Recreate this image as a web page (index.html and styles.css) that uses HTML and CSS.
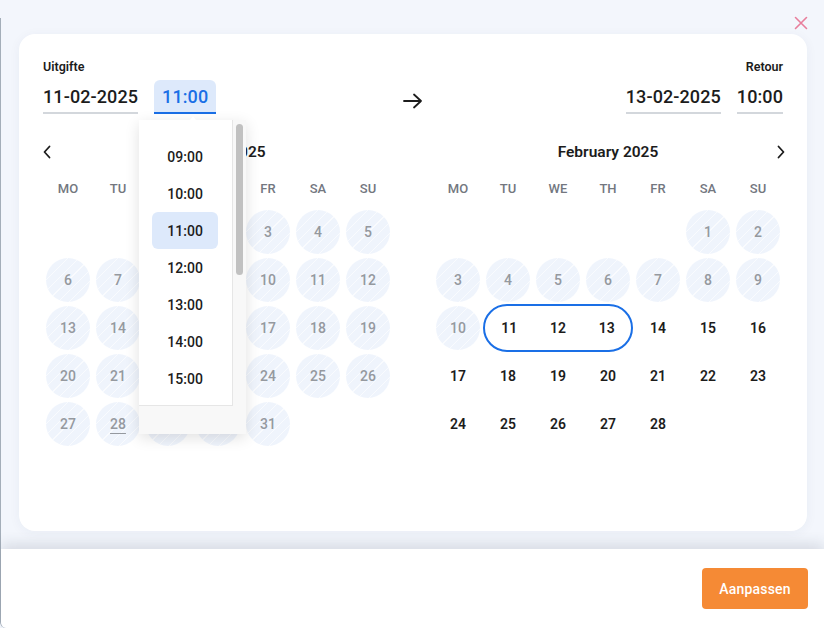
FILE: index.html
```html
<!DOCTYPE html>
<html lang="nl">
<head>
<meta charset="utf-8">
<title>Datum kiezen</title>
<link rel="stylesheet" href="styles.css">
</head>
<body>
<div class="page">
  <button class="close" aria-label="Sluiten">
    <svg width="14" height="14" viewBox="0 0 14 14"><path d="M1.5 1.5L12.5 12.5M12.5 1.5L1.5 12.5" stroke="#e87e9c" stroke-width="1.6" stroke-linecap="round" fill="none"/></svg>
  </button>
  <div class="modal">
    <div class="modal-body">
      <div class="card">
        <div class="trip">
          <div class="leg">
            <div class="label">Uitgifte</div>
            <div class="fields">
              <div class="field">11-02-2025</div>
              <div class="time-wrap">
                <div class="field field--time field--active">11:00</div>
                <div class="dropdown">
                  <div class="dd-list">
                    <div class="dd-item">09:00</div>
                    <div class="dd-item">10:00</div>
                    <div class="dd-item dd-item--sel">11:00</div>
                    <div class="dd-item">12:00</div>
                    <div class="dd-item">13:00</div>
                    <div class="dd-item">14:00</div>
                    <div class="dd-item">15:00</div>
                  </div>
                  <div class="dd-track"><div class="dd-thumb"></div></div>
                  <div class="dd-foot"></div>
                </div>
              </div>
            </div>
          </div>
          <div class="arrow">
            <svg width="20" height="16" viewBox="0 0 20 16"><path d="M1 8H18M11 1.5L18 8L11 14.5" stroke="#1c1c1c" stroke-width="1.8" fill="none" stroke-linecap="round" stroke-linejoin="round"/></svg>
          </div>
          <div class="leg leg--return">
            <div class="label">Retour</div>
            <div class="fields">
              <div class="field">13-02-2025</div>
              <div class="field">10:00</div>
            </div>
          </div>
        </div>

        <div class="calendars">
          <div class="cal">
            <div class="cal-head">
              <span class="nav nav--prev"><svg width="10" height="14" viewBox="0 0 10 14"><path d="M7.5 1.5L2.5 7L7.5 12.5" stroke="#1c1c1c" stroke-width="1.8" fill="none" stroke-linecap="round" stroke-linejoin="round"/></svg></span>
              <span class="cal-title">January 2025</span>
              <span></span>
            </div>
            <div class="weekdays"><span>MO</span><span>TU</span><span>WE</span><span>TH</span><span>FR</span><span>SA</span><span>SU</span></div>
            <div class="days">
              <span></span><span></span>
              <span class="day off"><i>1</i></span><span class="day off"><i>2</i></span><span class="day off"><i>3</i></span><span class="day off"><i>4</i></span><span class="day off"><i>5</i></span>
              <span class="day off"><i>6</i></span><span class="day off"><i>7</i></span><span class="day off"><i>8</i></span><span class="day off"><i>9</i></span><span class="day off"><i>10</i></span><span class="day off"><i>11</i></span><span class="day off"><i>12</i></span>
              <span class="day off"><i>13</i></span><span class="day off"><i>14</i></span><span class="day off"><i>15</i></span><span class="day off"><i>16</i></span><span class="day off"><i>17</i></span><span class="day off"><i>18</i></span><span class="day off"><i>19</i></span>
              <span class="day off"><i>20</i></span><span class="day off"><i>21</i></span><span class="day off"><i>22</i></span><span class="day off"><i>23</i></span><span class="day off"><i>24</i></span><span class="day off"><i>25</i></span><span class="day off"><i>26</i></span>
              <span class="day off"><i>27</i></span><span class="day off today"><i>28</i></span><span class="day off"><i>29</i></span><span class="day off"><i>30</i></span><span class="day off"><i>31</i></span>
            </div>
          </div>

          <div class="cal">
            <div class="cal-head">
              <span></span>
              <span class="cal-title">February 2025</span>
              <span class="nav nav--next"><svg width="10" height="14" viewBox="0 0 10 14"><path d="M2.5 1.5L7.5 7L2.5 12.5" stroke="#1c1c1c" stroke-width="1.8" fill="none" stroke-linecap="round" stroke-linejoin="round"/></svg></span>
            </div>
            <div class="weekdays"><span>MO</span><span>TU</span><span>WE</span><span>TH</span><span>FR</span><span>SA</span><span>SU</span></div>
            <div class="days">
              <span></span><span></span><span></span><span></span><span></span>
              <span class="day off"><i>1</i></span><span class="day off"><i>2</i></span>
              <span class="day off"><i>3</i></span><span class="day off"><i>4</i></span><span class="day off"><i>5</i></span><span class="day off"><i>6</i></span><span class="day off"><i>7</i></span><span class="day off"><i>8</i></span><span class="day off"><i>9</i></span>
              <span class="day off"><i>10</i></span>
              <div class="range"><span class="day"><i>11</i></span><span class="day"><i>12</i></span><span class="day"><i>13</i></span></div>
              <span class="day"><i>14</i></span><span class="day"><i>15</i></span><span class="day"><i>16</i></span>
              <span class="day"><i>17</i></span><span class="day"><i>18</i></span><span class="day"><i>19</i></span><span class="day"><i>20</i></span><span class="day"><i>21</i></span><span class="day"><i>22</i></span><span class="day"><i>23</i></span>
              <span class="day"><i>24</i></span><span class="day"><i>25</i></span><span class="day"><i>26</i></span><span class="day"><i>27</i></span><span class="day"><i>28</i></span>
            </div>
          </div>
        </div>
      </div>
    </div>
    <div class="footer">
      <button class="btn">Aanpassen</button>
    </div>
  </div>
</div>
</body>
</html>
```

FILE: styles.css
```css
* { box-sizing: border-box; }

html, body {
  margin: 0;
  padding: 0;
}

body {
  width: 824px;
  height: 628px;
  overflow: hidden;
  background: #f3f6fc;
  font-family: Roboto, "Noto Sans", "Liberation Sans", sans-serif;
  color: #1c1c1c;
}

.page {
  position: relative;
  height: 628px;
  padding-top: 18px;
}

.close {
  position: absolute;
  top: 16px;
  right: 16px;
  width: 14px;
  height: 14px;
  padding: 0;
  border: 0;
  background: none;
  display: flex;
}

.modal {
  height: 610px;
  display: flex;
  flex-direction: column;
  border-left: 1px solid #a4aeb9;
  border-bottom-left-radius: 6px;
}

.modal-body {
  flex: 1;
  display: flex;
  padding: 16px 17px 18px 18px;
}

.card {
  flex: 1;
  background: #fff;
  border-radius: 16px;
  box-shadow: 0 2px 12px rgba(30, 50, 90, 0.05);
  padding: 25px 24px 0 24px;
}

/* Trip header */
.trip {
  display: grid;
  grid-template-columns: 1fr auto 1fr;
  align-items: end;
}

.leg {
  display: flex;
  flex-direction: column;
  align-items: flex-start;
}

.leg--return {
  align-items: flex-end;
}

.label {
  font-size: 12.5px;
  line-height: 16px;
  font-weight: 600;
  color: #1c1c1c;
  margin-bottom: 5px;
}

.fields {
  display: flex;
  gap: 16px;
}

.field {
  height: 34px;
  display: flex;
  align-items: center;
  font-size: 18px;
  font-weight: 500;
  letter-spacing: 0.1px;
  color: #1c1c1c;
  border-bottom: 2px solid #d3d7dc;
  padding-top: 1px;
}

.field--time {
  padding: 1px 8px 0;
}

.field--active {
  background: #dde9fb;
  color: #1a6fe6;
  border-bottom-color: #1a6fe6;
  border-radius: 6px 6px 0 0;
}

.time-wrap {
  position: relative;
}

.arrow {
  display: flex;
  margin-bottom: 5px;
}

/* Dropdown */
.dropdown {
  position: absolute;
  top: calc(100% + 6px);
  left: -15px;
  z-index: 5;
  width: 107px;
  display: grid;
  grid-template-columns: 94px 13px;
  grid-template-rows: 286px 28px;
  background: #f8f8f8;
  box-shadow: 0 4px 14px rgba(0, 0, 0, 0.12);
}

.dropdown::before {
  content: "";
  position: absolute;
  top: -4px;
  left: 51px;
  border-left: 3px solid transparent;
  border-right: 3px solid transparent;
  border-bottom: 4px solid #fff;
}

.dd-list {
  background: #fff;
  border-right: 1px solid #e6e6e6;
  border-bottom: 1px solid #e6e6e6;
  padding-top: 18px;
  overflow: hidden;
}

.dd-item {
  height: 37px;
  margin: 0 14px 0 13px;
  display: flex;
  align-items: center;
  justify-content: center;
  font-size: 14px;
  font-weight: 500;
  color: #1c1c1c;
  border-radius: 6px;
}

.dd-item--sel {
  background: #dde9fb;
}

.dd-track {
  padding: 4px 3px 0 3px;
}

.dd-thumb {
  height: 151px;
  border-radius: 4px;
  background: #c1c1c1;
}

.dd-foot {
  grid-column: 1 / span 2;
}

/* Calendars */
.calendars {
  margin-top: 26px;
  display: flex;
  justify-content: space-between;
}

.cal {
  width: 350px;
}

.cal-head {
  height: 24px;
  display: grid;
  grid-template-columns: 24px 1fr 24px;
  align-items: center;
}

.nav {
  display: flex;
}

.nav--prev { justify-content: flex-start; margin-left: -1px; }
.nav--next { justify-content: flex-end; margin-right: -3px; }

.cal-title {
  text-align: center;
  font-size: 15.5px;
  font-weight: 600;
  color: #1c1c1c;
}

.weekdays {
  margin-top: 14px;
  height: 20px;
  display: grid;
  grid-template-columns: repeat(7, 50px);
  align-items: center;
  font-size: 13px;
  font-weight: 500;
  color: #73777f;
}

.weekdays span {
  text-align: center;
}

.days {
  margin-top: 10px;
  display: grid;
  grid-template-columns: repeat(7, 50px);
  grid-auto-rows: 48px;
}

.day {
  display: flex;
  align-items: center;
  justify-content: center;
}

.day i {
  font-style: normal;
  width: 44px;
  height: 44px;
  border-radius: 50%;
  display: flex;
  align-items: center;
  justify-content: center;
  font-size: 14px;
  font-weight: 600;
  color: #1c1c1c;
}

.day.off i {
  font-weight: 500;
  color: #95999f;
  background: repeating-linear-gradient(135deg, #eff4fc 0 7px, #f9fbfe 7px 8px);
}

.day.today i {
  text-decoration: underline;
  text-underline-offset: 4px;
  text-decoration-thickness: 1px;
}

.range {
  grid-column: 2 / span 3;
  display: grid;
  grid-template-columns: repeat(3, 1fr);
  border: 2px solid #1a6fe6;
  border-radius: 24px;
}

/* Footer */
.footer {
  height: 79px;
  background: #fff;
  display: flex;
  justify-content: flex-end;
  align-items: flex-start;
  padding: 19px 16px 0 0;
  box-shadow: 0 -5px 14px rgba(40, 55, 80, 0.14);
  border-bottom-left-radius: 6px;
}

.btn {
  width: 106px;
  height: 41px;
  border: 0;
  border-radius: 4px;
  background: #f58a35;
  color: #fff;
  font-family: Roboto, "Noto Sans", "Liberation Sans", sans-serif;
  font-size: 14px;
  font-weight: 500;
  letter-spacing: 0.2px;
}
```
